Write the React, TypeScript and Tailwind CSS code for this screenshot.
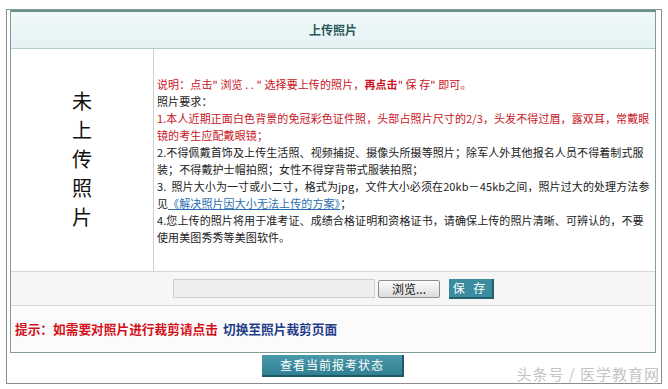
import React from "react";

const cjk = "font-['Noto_Sans_CJK_SC',sans-serif]";

const PhotoUpload = () => {
  const placeholder = ["未", "上", "传", "照", "片"];

  return (
    <div className={`w-[668px] h-[389px] bg-white relative overflow-hidden ${cjk}`}>
      <div className="ml-[6px] mt-[9px] w-[656px] h-[375px] border border-[#8c8c8c] border-t-[#7b9c98] pl-[3px] pr-[5px]">
        {/* main panel */}
        <div className="w-full border border-[#7f9e9a] border-t-2 border-t-[#6f918c]">
          <div className="h-[37px] flex items-center justify-center bg-gradient-to-b from-[#f1f9f9] to-[#e4f2f4] border-b border-[#b9cccc]">
            <span className="text-[12px] font-bold text-[#2c5a5c]">上传照片</span>
          </div>

          <div className="flex h-[222px]">
            <div className="w-[143px] shrink-0 border-r border-[#cfcfcf] flex flex-col items-center justify-center pb-[4px]">
              {placeholder.map((ch) => (
                <span key={ch} className="text-[20px] leading-[29px] text-[#111]">
                  {ch}
                </span>
              ))}
            </div>
            <div className="flex-1 pl-[3px] pt-[27px] text-[11px] tracking-[0.1px] leading-[17px] text-[#222] whitespace-nowrap">
              <p className="text-[#c8141e]">
                说明：点击" 浏览 . . " 选择要上传的照片，<span className="font-bold">再点击</span>" 保 存" 即可。
              </p>
              <p>照片要求：</p>
              <p className="text-[#c8141e]">
                1.本人近期正面白色背景的免冠彩色证件照，头部占照片尺寸的2/3，头发不得过眉，露双耳，常戴眼
              </p>
              <p className="text-[#c8141e]">镜的考生应配戴眼镜；</p>
              <p>2.不得佩戴首饰及上传生活照、视频捕捉、摄像头所摄等照片；除军人外其他报名人员不得着制式服</p>
              <p>装；不得戴护士帽拍照；女性不得穿背带式服装拍照；</p>
              <p>3.&nbsp;&nbsp;照片大小为一寸或小二寸，格式为jpg，文件大小必须在20kb－45kb之间，照片过大的处理方法参</p>
              <p>
                见<span className="text-[#2a6fb0] underline">《解决照片因大小无法上传的方案》</span>；
              </p>
              <p>4.您上传的照片将用于准考证、成绩合格证明和资格证书，请确保上传的照片清晰、可辨认的，不要</p>
              <p>使用美图秀秀等美图软件。</p>
            </div>
          </div>

          <div className="h-[34px] border-t border-[#d6d6d6] bg-[#f6f6f6] flex items-center pl-[162px]">
            <div className="w-[202px] h-[19px] border border-[#cfcfcf] bg-[#eeeeee]" />
            <button className="ml-[3px] w-[62px] h-[18px] border border-[#8d8d8d] rounded-[2px] bg-gradient-to-b from-[#fbfbfb] to-[#dcdcdc] text-[12px] leading-[16px] text-[#111]">
              浏览...
            </button>
            <button className="ml-[9px] w-[45px] h-[20px] bg-[#3b8c9e] border-r-2 border-b-2 border-[#24606d] text-[12px] leading-[16px] text-white tracking-[3px]">
              保 存
            </button>
          </div>

          <div className="h-[47px] border-t border-[#d9d9d9] bg-[#fbfbfb] flex items-center pl-[4px] text-[12.7px] font-bold">
            <span className="text-[#d4101a]">提示：如需要对照片进行裁剪请点击</span>
            <span className="ml-[5px] text-[#1f3d8a]">切换至照片裁剪页面</span>
          </div>
        </div>

        <div className="flex justify-center mt-[2px]">
          <button className="w-[142px] h-[22px] bg-gradient-to-b from-[#4b9aab] to-[#2f8093] border-r-2 border-b-2 border-[#1f5765] text-[12px] leading-[18px] text-white tracking-[1px]">
            查看当前报考状态
          </button>
        </div>
      </div>

      <div className="absolute right-[8px] bottom-[4px] text-[15px] text-[#c4c4c4] tracking-[1px]">
        头条号 / 医学教育网
      </div>
    </div>
  );
};

export default function App() {
  return <PhotoUpload />;
}
